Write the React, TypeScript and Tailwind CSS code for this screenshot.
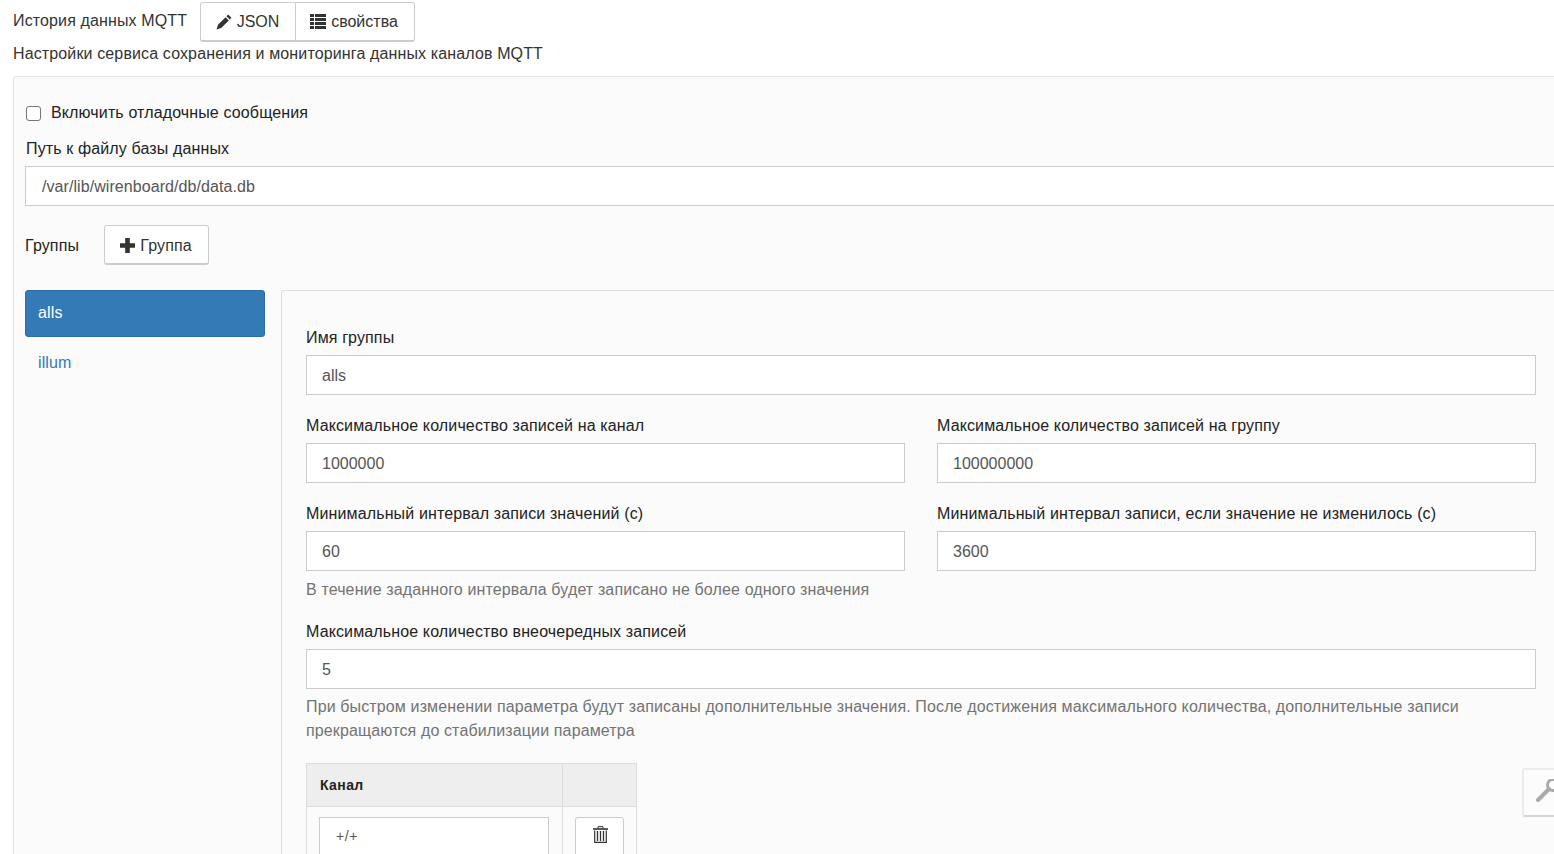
import type { ReactNode } from "react";

const inputClass =
  "block h-10 w-full border border-[#ccc] bg-white px-[15px] pt-[2px] tracking-normal text-[#555] outline-none";

function Field(props: { label: string; value: string; help?: ReactNode; helpClass?: string }) {
  return (
    <div className="min-w-0 flex-1">
      <label className="mb-[6px] block h-6 pt-px leading-6 text-[#222]">{props.label}</label>
      <input readOnly value={props.value} className={inputClass} />
      {props.help ? <p className={"leading-6 text-[#737373] " + props.helpClass}>{props.help}</p> : null}
    </div>
  );
}

function PencilIcon() {
  return (
    <svg viewBox="0 0 16 16" className="h-4 w-4" fill="#333">
      <path d="M12.2.6l3.2 3.2-1.7 1.7-3.2-3.2zM9.6 3.2l3.2 3.2-7.6 7.6L.5 15.5l1.5-4.7zM2.9 11.2l1.9 1.9-2.7.8z" />
    </svg>
  );
}

function ListIcon() {
  return (
    <svg viewBox="0 0 16 15" className="h-[15px] w-4" fill="#333">
      <path d="M0 0h4v3H0zM5 0h11v3H5zM0 4h4v3H0zM5 4h11v3H5zM0 8h4v3H0zM5 8h11v3H5zM0 12h4v3H0zM5 12h11v3H5z" />
    </svg>
  );
}

function PlusIcon() {
  return (
    <svg viewBox="0 0 15 15" className="h-[15px] w-[15px]" fill="#333">
      <path d="M5.2 0h4.6v5.2H15v4.6H9.8V15H5.2V9.8H0V5.2h5.2z" />
    </svg>
  );
}

function TrashIcon() {
  return (
    <svg viewBox="0 0 15 17" className="h-[17px] w-[15px]" fill="none" stroke="#333">
      <path d="M5 2.5V.7h5v1.8" />
      <path d="M0 3h15" strokeWidth="1.6" />
      <path d="M1.7 4.5v11.8h11.6V4.5" strokeWidth="1.2" />
      <path d="M4.5 5v10M7.5 5v10M10.5 5v10" strokeWidth="1.3" />
    </svg>
  );
}

function WrenchIcon() {
  return (
    <svg viewBox="0 0 28 28" className="h-7 w-7" fill="none" stroke="#aaa">
      <path d="M2 21L13 10" strokeWidth="4" strokeLinecap="round" />
      <circle cx="17" cy="6" r="5.5" strokeWidth="3" />
    </svg>
  );
}

export default function App() {
  return (
    <div className="relative h-[854px] w-[1554px] overflow-hidden bg-white pl-[13px] font-['Liberation_Sans',Arial,sans-serif] text-base tracking-[0.13px] text-[#333]">
      <div className="flex h-[42px] items-start pt-[2px]">
        <span className="mt-[7px] w-[187px] leading-6">История данных MQTT</span>
        <div className="flex h-10 rounded-[3px] border border-[#ccc] border-b-2 bg-white tracking-normal">
          <button className="flex w-[95px] items-center justify-center gap-[5px] border-r border-[#ccc] pr-px">
            <PencilIcon />
            JSON
          </button>
          <button className="flex w-[118px] items-center justify-center gap-[5px] pr-[2px]">
            <ListIcon />
            свойства
          </button>
        </div>
      </div>
      <p className="h-6 leading-6">Настройки сервиса сохранения и мониторинга данных каналов MQTT</p>

      <div className="mt-[10px] w-[1600px] rounded-[3px] border border-[#e3e3e3] bg-[#fbfbfb] pl-[11px] pt-6">
        <label className="flex h-6 items-center gap-[10px] pl-px text-[#222]">
          <span className="h-[15px] w-[15px] rounded-[3px] border border-[#767676] bg-white" />
          Включить отладочные сообщения
        </label>
        <label className="mt-3 block h-6 pl-px leading-6 text-[#222]">Путь к файлу базы данных</label>
        <input
          readOnly
          value="/var/lib/wirenboard/db/data.db"
          className="mt-[5px] block h-10 w-[1535px] border border-[#ccc] bg-white px-4 pt-[2px] tracking-[0.07px] text-[#555] outline-none"
        />

        <div className="mt-[19px] flex h-10 items-center gap-[25px]">
          <span className="pt-[2px] text-[#222]">Группы</span>
          <button className="flex h-10 w-[105px] items-center justify-center gap-[5px] rounded-[3px] border border-[#ccc] border-b-2 bg-white pr-px pt-[2px]">
            <PlusIcon />
            Группа
          </button>
        </div>

        <div className="mt-[25px] flex gap-4">
          <div className="w-60 shrink-0">
            <div className="flex h-[47px] items-center rounded-[3px] border border-[#2e6da4] bg-[#337ab7] px-3 pb-[2px] text-white">
              alls
            </div>
            <div className="mt-[3px] flex h-[46px] items-center px-[13px] text-[#337ab7]">illum</div>
          </div>

          <div className="h-[600px] w-[1280px] shrink-0 rounded-[3px] border border-[#ddd] px-6 pt-[34px]">
            <Field label="Имя группы" value="alls" />
            <div className="mt-[18px] flex gap-8">
              <Field label="Максимальное количество записей на канал" value="1000000" />
              <Field label="Максимальное количество записей на группу" value="100000000" />
            </div>
            <div className="mt-[18px] flex gap-8">
              <Field
                label="Минимальный интервал записи значений (с)"
                value="60"
                help="В течение заданного интервала будет записано не более одного значения"
                helpClass="mt-[7px]"
              />
              <Field label="Минимальный интервал записи, если значение не изменилось (с)" value="3600" />
            </div>
            <div className="mt-[17px]">
              <Field
                label="Максимальное количество внеочередных записей"
                value="5"
                help="При быстром изменении параметра будут записаны дополнительные значения. После достижения максимального количества, дополнительные записи прекращаются до стабилизации параметра"
                helpClass="mt-[6px]"
              />
            </div>

            <table className="mt-5 w-[331px] border-collapse text-sm">
              <thead>
                <tr className="h-[43px] bg-[#eee]">
                  <th className="w-[256px] border border-[#ddd] px-[13px] text-left font-bold tracking-[0.4px] text-[#222]">
                    Канал
                  </th>
                  <th className="border border-[#ddd]" />
                </tr>
              </thead>
              <tbody>
                <tr>
                  <td className="border border-[#ddd] px-3 py-[10px]">
                    <input
                      readOnly
                      value="+/+"
                      className="block h-10 w-[230px] border border-[#ccc] bg-white px-4 pb-[2px] tracking-[0.6px] text-[#555] outline-none"
                    />
                  </td>
                  <td className="border border-[#ddd] px-3 py-[10px]">
                    <button className="flex h-10 w-[49px] items-start justify-center rounded-[3px] border border-[#ccc] bg-white pl-[2px] pt-2">
                      <TrashIcon />
                    </button>
                  </td>
                </tr>
              </tbody>
            </table>
          </div>
        </div>
      </div>

      <div className="absolute left-[1522px] top-[768px] flex h-[49px] w-[60px] items-start rounded-[3px] border-2 border-[#ececec] border-b-[#d4d4d4] bg-[#fcfcfc] pl-3 pt-[9px]">
        <WrenchIcon />
      </div>
    </div>
  );
}
